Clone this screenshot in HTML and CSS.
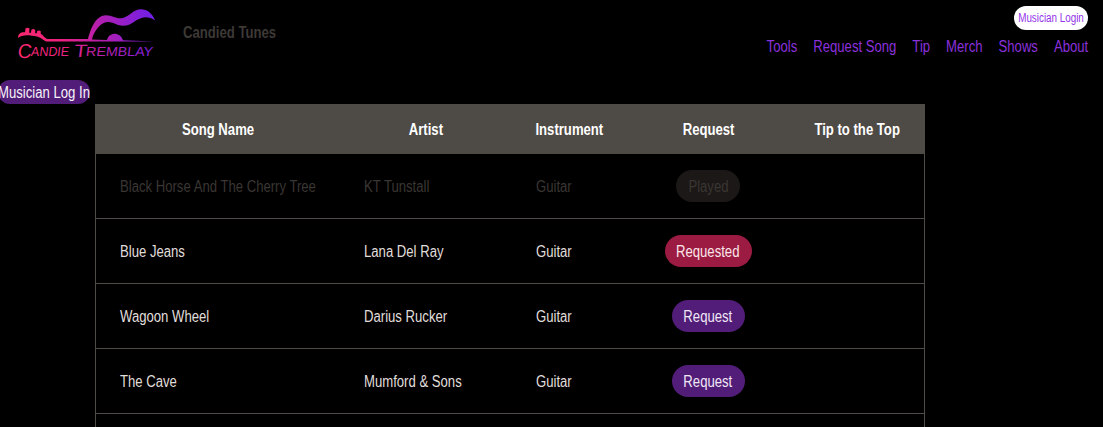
FILE: index.html
```html
<!DOCTYPE html>
<html lang="en">
<head>
<meta charset="utf-8">
<title>Candied Tunes</title>
<link rel="stylesheet" href="styles.css">
</head>
<body>
<header class="header">
  <a class="brand">
    <svg class="logo" width="160" height="64" viewBox="0 0 160 64">
      <defs>
        <linearGradient id="neon" gradientUnits="userSpaceOnUse" x1="18" y1="50" x2="155" y2="20">
          <stop offset="0" stop-color="#ff286c"/>
          <stop offset="0.3" stop-color="#ed237f"/>
          <stop offset="0.6" stop-color="#b41fae"/>
          <stop offset="1" stop-color="#701fe9"/>
        </linearGradient>
      </defs>
      <g fill="url(#neon)">
        <path d="M18 38C18 34 20.500 32 25 32.300L25.500 28.500Q27.500 27 29.500 28.500L29.200 32.700H31L31.300 30Q33.300 28.200 35.200 30V33.200H36.800L37 31.200Q39 29.700 40.800 31.200V34C43 34.500 44 37.500 47.500 39H88C91 28 96 15.300 106 15.300C113 15.300 116 19.500 123 18C130 16 133 9.300 141 9.200C147 9.200 152 13 155.300 20.500C148 15.500 142 17 136 20.500C130 25 125 27 118 25C110 21 105 20.500 100 25.500C95 30.500 93 35 92 39.500L107 40C109 31.800 120 31.500 123 40.200L154 41.400L107 41.500H46C43 40 41 37.500 37 36.500C30 35 22 34 18 38Z"/>
        <g class="logo-text" transform="translate(6.500 0) skewX(-7)">
          <text x="17.500" y="58" font-size="20" textLength="14" lengthAdjust="spacingAndGlyphs">C</text>
          <text x="31" y="56" font-size="13" textLength="38" lengthAdjust="spacingAndGlyphs">ANDIE</text>
          <text x="74" y="57.500" font-size="18" textLength="13" lengthAdjust="spacingAndGlyphs">T</text>
          <text x="86" y="56" font-size="13" textLength="67" lengthAdjust="spacingAndGlyphs">REMBLAY</text>
        </g>
      </g>
    </svg>
    <span class="brand-name narrow">Candied Tunes</span>
  </a>
  <div class="menu">
    <button class="login-small"><span class="narrow mid">Musician Login</span></button>
    <nav class="nav narrow">
      <a>Tools</a><a>Request Song</a><a>Tip</a><a>Merch</a><a>Shows</a><a>About</a>
    </nav>
  </div>
</header>
<button class="login"><span class="narrow mid">Musician Log In</span></button>
<table class="songs">
  <colgroup><col class="c-song"><col class="c-artist"><col class="c-instrument"><col class="c-request"><col class="c-tip"></colgroup>
  <thead>
    <tr><th><span class="narrow mid">Song Name</span></th><th><span class="narrow mid">Artist</span></th><th><span class="narrow mid">Instrument</span></th><th><span class="narrow mid">Request</span></th><th><span class="narrow mid">Tip to the Top</span></th></tr>
  </thead>
  <tbody>
    <tr class="played"><td><span class="narrow">Black Horse And The Cherry Tree</span></td><td><span class="narrow">KT Tunstall</span></td><td><span class="narrow">Guitar</span></td><td class="action"><button class="pill pill-played"><span class="narrow mid">Played</span></button></td><td></td></tr>
    <tr><td><span class="narrow">Blue Jeans</span></td><td><span class="narrow">Lana Del Ray</span></td><td><span class="narrow">Guitar</span></td><td class="action"><button class="pill pill-requested"><span class="narrow mid">Requested</span></button></td><td></td></tr>
    <tr><td><span class="narrow">Wagoon Wheel</span></td><td><span class="narrow">Darius Rucker</span></td><td><span class="narrow">Guitar</span></td><td class="action"><button class="pill"><span class="narrow mid">Request</span></button></td><td></td></tr>
    <tr><td><span class="narrow">The Cave</span></td><td><span class="narrow">Mumford &amp; Sons</span></td><td><span class="narrow">Guitar</span></td><td class="action"><button class="pill"><span class="narrow mid">Request</span></button></td><td></td></tr>
    <tr class="last"><td></td><td></td><td></td><td></td><td></td></tr>
  </tbody>
</table>
</body>
</html>
```
FILE: styles.css
```css
* { box-sizing: border-box; }
html { height: 100%; overflow: hidden; background: #000; }
body {
  height: 100%;
  margin: 0;
  overflow: hidden;
  color: #e0dedc;
  font: 16px/24px "Liberation Sans", Arial, sans-serif;
}
button {
  display: flex;
  align-items: center;
  justify-content: center;
  border: 0;
  padding: 0;
  font: inherit;
}
/* Condensed lettering */
.narrow {
  display: inline-block;
  white-space: nowrap;
  transform: translateY(1px) scaleX(0.82);
  transform-origin: left center;
}
.mid { flex: none; transform-origin: center; }
.header { display: flex; justify-content: space-between; height: 80px; padding-right: 15px; }
.brand { display: flex; gap: 23px; }
.logo { display: block; }
.brand-name { padding-top: 20px; color: #3d3936; font-weight: 700; }
.menu { display: flex; flex-direction: column; align-items: flex-end; gap: 4px; padding-top: 6px; }
.login-small {
  width: 74px;
  height: 24px;
  border-radius: 12px;
  background: #fff;
  color: #9333ea;
  font-size: 12px;
}
.login-small .narrow { transform: scaleX(0.82); }
.nav { display: flex; gap: 19.5px; color: #8a31dc; transform-origin: right center; }
.login {
  width: 92px;
  height: 24px;
  margin-left: -2px;
  border-radius: 12px;
  background: #521d78;
  color: #f6f2f8;
}
.songs {
  width: 830px;
  margin-left: 95px;
  table-layout: fixed;
  border: 1px solid #4e4a45;
  border-spacing: 0;
}
.c-song { width: 244px; }
.c-artist { width: 171.5px; }
.c-instrument { width: 115.5px; }
.c-request { width: 163px; }
.c-tip { width: 134px; }
.songs th { height: 49px; padding: 0 0 1px; background: #4e4a45; color: #fff; font-weight: 700; text-align: center; }
.songs td { height: 65px; padding: 0 24px; border-bottom: 1px solid #4e4a45; }
.songs td.action { padding: 0 1px 0 0; }
.songs .played { color: #3a3633; }
.pill {
  width: 73px;
  height: 32px;
  margin: 0 auto;
  border-radius: 16px;
  background: #521d78;
  color: #f0e6f6;
}
.pill-requested { width: 87px; background: #9b1b42; color: #fbe6e9; }
.pill-played { width: 64px; background: #1c1817; color: #3a3633; }
```
